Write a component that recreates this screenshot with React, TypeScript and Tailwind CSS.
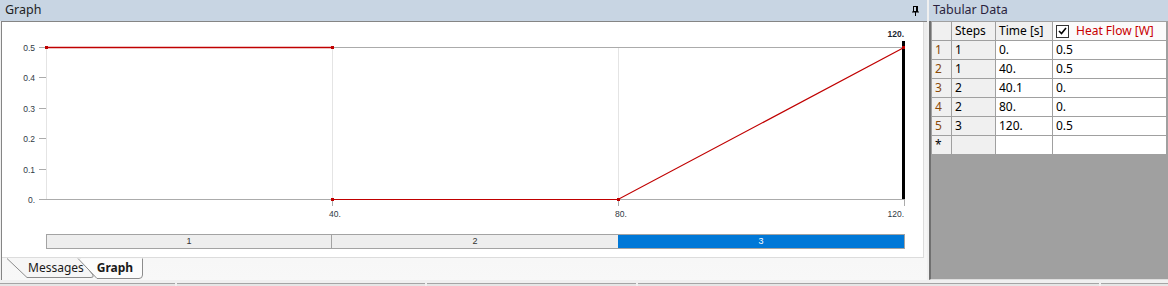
const yTicks = [0, 1, 2, 3, 4, 5].map((i) => ({
  y: 199 - i * 30.4,
  label: i === 0 ? "0." : `0.${i}`,
}));

const rows = [
  { n: "1", step: "1", time: "0.", flow: "0.5" },
  { n: "2", step: "1", time: "40.", flow: "0.5" },
  { n: "3", step: "2", time: "40.1", flow: "0." },
  { n: "4", step: "2", time: "80.", flow: "0." },
  { n: "5", step: "3", time: "120.", flow: "0.5" },
];

function Pin() {
  return (
    <svg width="8" height="10" viewBox="0 0 8 10" className="text-black">
      <rect x="1.5" y="0.5" width="4" height="5" fill="none" stroke="currentColor" />
      <line x1="4.5" y1="0.5" x2="4.5" y2="5.5" stroke="currentColor" />
      <line x1="0" y1="6" x2="7" y2="6" stroke="currentColor" />
      <line x1="3.5" y1="6" x2="3.5" y2="10" stroke="currentColor" />
    </svg>
  );
}

function Chart() {
  const label = { fontFamily: "'Liberation Sans', Arial, sans-serif", fontSize: 8.5, fill: "#2f3944" };
  return (
    <svg width={920} height={205} viewBox="2 22 920 205">
      {[46, 332, 618, 904].map((x) => (
        <line key={x} x1={x + 0.5} y1={47} x2={x + 0.5} y2={199} stroke="#e4e4e4" />
      ))}
      <line x1={46} y1={47.5} x2={905} y2={47.5} stroke="#ababab" />
      <line x1={46} y1={199.5} x2={905} y2={199.5} stroke="#ababab" />
      {yTicks.map((t) => (
        <g key={t.label}>
          <line x1={39} y1={Math.round(t.y) + 0.5} x2={46} y2={Math.round(t.y) + 0.5} stroke="#ababab" />
          <text x={35} y={Math.round(t.y) + 4} textAnchor="end" style={label}>
            {t.label}
          </text>
        </g>
      ))}
      {[332, 618, 904].map((x) => (
        <line key={x} x1={x + 0.5} y1={199} x2={x + 0.5} y2={206} stroke="#ababab" />
      ))}
      <text x={329} y={216.5} style={label}>40.</text>
      <text x={615} y={216.5} style={label}>80.</text>
      <text x={904} y={216.5} textAnchor="end" style={label}>120.</text>
      <rect x={902} y={41} width={3} height={158} fill="#000" />
      <text x={904} y={36.5} textAnchor="end" style={{ ...label, fontWeight: 700, fill: "#1c2530" }}>
        120.
      </text>
      <polyline points="46,47.5 332,47.5" fill="none" stroke="#c00000" strokeWidth={1.4} />
      <polyline points="333,199.5 618,199.5 904,47.5" fill="none" stroke="#c00000" strokeWidth={1.2} />
      {[
        [46, 47],
        [332, 47],
        [332, 199],
        [618, 199],
        [903, 47],
      ].map(([x, y]) => (
        <rect key={`${x}-${y}`} x={x - 1} y={y - 1} width={3} height={3} fill="#c00000" />
      ))}
    </svg>
  );
}

function Tabs() {
  return (
    <div className="relative h-[22px] flex items-center text-[12px] text-[#1a1a1a]">
      <svg width="150" height="22" className="absolute left-0 top-0">
        <path d="M5 0.5 L25 19.5 L89 19.5 Q92 19.5 91 17 L78 0.5" fill="#f6f6f6" stroke="#8c8c8c" />
        <path d="M76 0.5 L95 20.5 L137 20.5 Q140.5 20.5 140.5 17 L140.5 0.5" fill="#fcfcfc" stroke="#8c8c8c" />
      </svg>
      <span className="relative pl-[26px] -mt-[2px]">Messages</span>
      <span className="relative pl-[13px] -mt-[2px] font-bold">Graph</span>
    </div>
  );
}

export default function App() {
  const cell = "h-[18px] flex items-center pl-[3px] text-[12px] leading-none";
  return (
    <div className="w-[1168px] h-[286px] bg-[#f0f0f0] flex flex-col overflow-hidden font-['Noto_Sans',sans-serif]">
      <div className="flex h-[280px]">
        {/* left: graph */}
        <div className="w-[927px] flex flex-col">
          <div className="h-[21px] bg-[#c8d5e3] flex items-center justify-between pl-[5px] pr-[7px] text-[12.5px] text-[#1e1e1e]">
            <span>Graph</span>
            <Pin />
          </div>
          <div className="flex-1 ml-[1px] border-l border-t border-[#858585] flex flex-col bg-gradient-to-b from-[#ececec] to-[#f8f8f8]">
            <div className="h-[236px] mr-[3px] bg-white border-r border-b border-[#dcdcdc] flex flex-col">
              <Chart />
              <div className="mt-[7px] ml-[44px] w-[859px] h-[15px] border border-[#a3a3a3] flex text-[9px] font-['Liberation_Sans',sans-serif] text-[#333]">
                <div className="w-[285px] bg-[#eeeeee] border-r border-[#a3a3a3] flex items-center justify-center">1</div>
                <div className="w-[286px] bg-[#eeeeee] flex items-center justify-center">2</div>
                <div className="flex-1 bg-[#0078d7] text-white flex items-center justify-center">3</div>
              </div>
            </div>
            <Tabs />
          </div>
        </div>

        {/* right: tabular data */}
        <div className="ml-[2px] flex-1 flex flex-col">
          <div className="h-[21px] bg-[#c8d5e3] flex items-center pl-[4px] text-[12.5px] text-[#2a1f3d]">
            Tabular Data
          </div>
          <div className="flex-1 border-l-2 border-[#707070] bg-[#a0a0a0] border-b border-b-[#dedede]">
            <div className="grid grid-cols-[19px_43px_56px_113px] gap-px p-px w-fit text-black">
              <div className={`${cell} bg-[#f0f0f0]`} />
              <div className={`${cell} bg-[#f0f0f0]`}>Steps</div>
              <div className={`${cell} bg-[#f0f0f0]`}>Time [s]</div>
              <div className={`${cell} bg-[#fbfbfb] gap-[7px]`}>
                <span className="w-[13px] h-[13px] border border-[#333] bg-white flex items-center justify-center">
                  <svg width="9" height="8" viewBox="0 0 9 8">
                    <path d="M1 4 L3.5 6.5 L8 1" fill="none" stroke="#000" strokeWidth="1.6" />
                  </svg>
                </span>
                <span className="text-[#c80000]">Heat Flow [W]</span>
              </div>
              {rows.map((r) => (
                <div key={r.n} className="contents">
                  <div className={`${cell} bg-[#f0f0f0] text-[#8a4a08]`}>{r.n}</div>
                  <div className={`${cell} bg-[#f0f0f0]`}>{r.step}</div>
                  <div className={`${cell} bg-white`}>{r.time}</div>
                  <div className={`${cell} bg-white`}>{r.flow}</div>
                </div>
              ))}
              <div className={`${cell} bg-[#f0f0f0] text-[10px] items-start pt-[3px]`}>*</div>
              <div className={`${cell} bg-[#f0f0f0]`} />
              <div className={`${cell} bg-white`} />
              <div className={`${cell} bg-white`} />
            </div>
          </div>
        </div>
      </div>

      {/* bottom strip */}
      <div className="flex-1 pt-[3px] flex gap-[2px]">
        <div className="w-[175px] border-t border-[#a5a5a5] bg-[#e6e6e6]" />
        <div className="w-[248px] border-t border-[#a5a5a5] bg-[#e6e6e6]" />
        <div className="w-[209px] border-t border-[#a5a5a5] bg-[#e6e6e6]" />
        <div className="w-[461px] border-t border-[#a5a5a5] bg-[#e6e6e6]" />
        <div className="flex-1 border-t border-[#a5a5a5] bg-[#e6e6e6]" />
      </div>
    </div>
  );
}
